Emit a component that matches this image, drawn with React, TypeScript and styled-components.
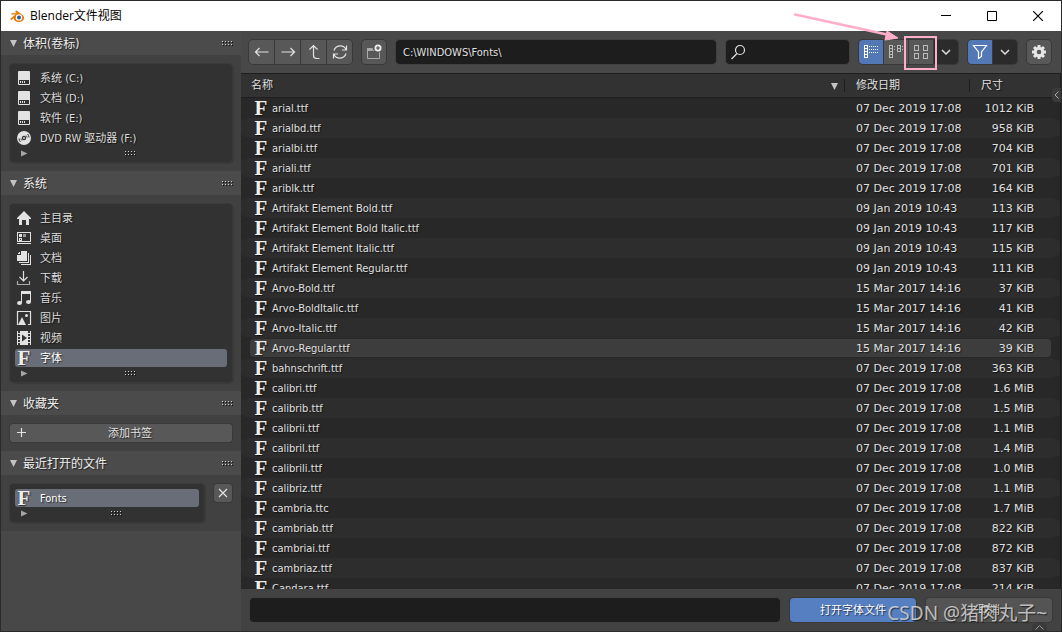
import React from 'react';
import styled, { createGlobalStyle, css } from 'styled-components';

const sans = '"DejaVu Sans Condensed", "DejaVu Sans", "Noto Sans CJK SC", sans-serif';
const wide = '"DejaVu Sans", "Noto Sans CJK SC", sans-serif';

const GlobalStyle = createGlobalStyle`
  * { box-sizing: border-box; }
  body { margin: 0; background: #2b2b2b; }
  button, input { font: inherit; color: inherit; margin: 0; padding: 0; border: 0; outline: 0; }
  button { cursor: pointer; text-shadow: inherit; }
  svg { display: block; flex: none; }
`;

const Window = styled.div`
  display: flex;
  flex-direction: column;
  height: 100vh;
  border: 1px solid #2b2b2b;
  background: #484848;
  color: #e0e0e0;
  font: 11px/20px ${sans};
  text-shadow: 1px 1px 1px rgba(0, 0, 0, 0.6);
`;

/* Title bar */
const TitleBar = styled.header`
  display: flex;
  align-items: center;
  flex: none;
  height: 30px;
  padding-left: 8px;
  background: #fff;
  color: #000;
  text-shadow: none;
`;

const Title = styled.h1`
  flex: 1;
  margin: 0 0 0 5px;
  font: 12px/20px "Open Sans", "Noto Sans CJK SC", sans-serif;
`;

const CaptionButton = styled.button`
  display: grid;
  place-items: center;
  width: 46px;
  height: 30px;
  background: none;
`;

const Body = styled.div`
  display: flex;
  flex: 1;
  min-height: 0;
`;

/* Sidebar */
const Sidebar = styled.aside`
  flex: none;
  width: 240px;
  background: #484848;
`;

const PanelHeader = styled.h2`
  display: flex;
  align-items: center;
  height: 24px;
  margin: 0;
  padding: 0 8px 0 9px;
  background: #4b4b4b;
  font: 12px/22px ${sans};
  color: #eee;
`;

const PanelTitle = styled.span`
  flex: 1;
  padding: 2px 0 0 6px;
`;

const PanelBody = styled.div`
  display: flex;
  align-items: flex-start;
  gap: 10px;
  padding: 9px;
  background: #414141;
`;

const ListBox = styled.div`
  flex: 1;
  padding: 4px 5px 3px;
  border-radius: 4px;
  background: #323232;
  box-shadow: 0 0 0 1px #3a3a3a, 1px 1px 0 1px #393939;
`;

const List = styled.ul`
  margin: 0;
  padding: 0;
  list-style: none;
`;

const ListRow = styled.li`
  padding: 1px 0;
`;

const Item = styled.button<{ $active?: boolean }>`
  display: flex;
  align-items: center;
  gap: 8px;
  width: 100%;
  height: 18px;
  padding-left: 1px;
  border-radius: 3px;
  background: ${(p) => (p.$active ? '#696d77' : 'transparent')};
  color: ${(p) => (p.$active ? '#fff' : '#dcdcdc')};
  text-align: left;
`;

const Label = styled.span`
  padding-top: 2px;
  line-height: 16px;
`;

const ListFooter = styled.div`
  display: grid;
  grid-template-columns: 18px 1fr;
  align-items: center;
  justify-items: center;
  height: 11px;
`;

const WideButton = styled.button`
  display: grid;
  grid-template-columns: 24px 1fr 6px;
  align-items: center;
  justify-items: center;
  flex: 1;
  height: 18px;
  border-radius: 3px;
  background: #585858;
  box-shadow: 0 0 0 1px #393939;
`;

const RemoveButton = styled.button`
  display: grid;
  place-items: center;
  width: 18px;
  height: 18px;
  border-radius: 3px;
  background: #585858;
  box-shadow: 0 0 0 1px #393939;
`;

/* Main region */
const Main = styled.main`
  position: relative;
  display: flex;
  flex-direction: column;
  flex: 1;
  min-width: 0;
`;

const Toolbar = styled.div`
  display: flex;
  align-items: center;
  gap: 10px;
  flex: none;
  height: 42px;
  padding: 0 10px 0 8px;
  background: #484848;
`;

const Group = styled.div`
  display: flex;
  gap: 1px;
  border-radius: 4px;
  background: #393939;
  box-shadow: 0 0 0 1px #393939;
  & > :first-child { border-radius: 4px 0 0 4px; }
  & > :last-child { border-radius: 0 4px 4px 0; }
  & > :only-child { border-radius: 4px; }
`;

const tones = { normal: '#585858', active: '#5279b6', menu: '#2b2b2b' };

const ToolButton = styled.button<{ $tone?: keyof typeof tones }>`
  position: relative;
  display: grid;
  place-items: center;
  width: 24px;
  height: 24px;
  background: ${(p) => tones[p.$tone ?? 'normal']};
`;

const NavButton = styled(ToolButton)`
  width: 25px;
`;

const fieldBox = css`
  height: 24px;
  border-radius: 4px;
  background: #1d1d1d;
  box-shadow: 0 0 0 1px #404040;
`;

const Field = styled.input`
  ${fieldBox}
  flex: 1;
  min-width: 0;
  padding: 0 7px;
  text-shadow: inherit;
`;

const SearchField = styled.label`
  ${fieldBox}
  display: flex;
  align-items: center;
  flex: none;
  width: 123px;
  padding-left: 4px;
  input { flex: 1; min-width: 0; background: none; }
`;

const Annotation = styled.svg`
  position: absolute;
  right: -4px;
  top: -28px;
  z-index: 2;
  pointer-events: none;
`;

/* File table */
const FileArea = styled.div`
  flex: 1;
  min-height: 0;
  overflow: hidden;
  border-top: 1px solid #1e1e1e;
  border-right: 1px solid #1e1e1e;
  background: #282828;
`;

const Table = styled.table`
  width: 100%;
  table-layout: fixed;
  border-collapse: separate;
  border-spacing: 0;
`;

const HeadCell = styled.th<{ $width?: number }>`
  width: ${(p) => (p.$width ? `${p.$width}px` : 'auto')};
  height: 24px;
  padding: 1px 6px 0 ${(p) => (p.$width ? 12 : 10)}px;
  border-bottom: 1px solid #1e1e1e;
  background: ${(p) => (p.$width ? 'linear-gradient(#1e1e1e, #1e1e1e) left center / 1px 13px no-repeat, ' : '')}#323232;
  font-weight: normal;
  text-align: left;
`;

const HeadLabel = styled.span`
  display: flex;
  align-items: center;
  justify-content: space-between;
`;

const Cell = styled.td`
  height: 20px;
  padding: 2px 0 0 12px;
  border: 1px solid transparent;
  border-width: 1px 0;
  background-clip: padding-box;
  font-family: ${wide};
  line-height: 16px;
  white-space: nowrap;
  &:first-child {
    padding: 0 0 0 3px;
    border-left-width: 9px;
    border-radius: 13px 0 0 13px / 5px 0 0 5px;
    font-family: ${sans};
  }
  &:last-child {
    padding: 2px 17px 0 0;
    border-right-width: 9px;
    border-radius: 0 13px 13px 0 / 0 5px 5px 0;
    text-align: right;
  }
`;

const Row = styled.tr<{ $hover?: boolean }>`
  background: #282828;
  &:nth-child(even) { background: #2d2d2d; }
  ${(p) => p.$hover && css`${Cell} { background-color: #3d3d3d; }`}
`;

const FileName = styled.span`
  display: flex;
  align-items: center;
  gap: 3px;
  height: 18px;
`;

const Glyph = styled.span`
  width: 16px;
  height: 18px;
  flex: none;
  color: #eee;
  font: bold 21px/18px "Liberation Serif", serif;
  text-align: center;
`;

const IconSlot = styled.span`
  display: grid;
  place-items: center;
  width: 16px;
  height: 18px;
  flex: none;
`;

const Footer = styled.footer`
  display: flex;
  align-items: flex-start;
  gap: 10px;
  flex: none;
  height: 42px;
  padding: 9px;
  background: #424242;
`;

const ActionButton = styled.button<{ $primary?: boolean }>`
  width: 126px;
  height: 24px;
  padding-top: 2px;
  flex: none;
  border-radius: 4px;
  background: ${(p) => (p.$primary ? '#557fc1' : '#545454')};
  box-shadow: 0 0 0 1px #393939;
  color: ${(p) => (p.$primary ? '#fff' : '#dcdcdc')};
`;

const RegionTab = styled.button<{ $edge: 'right' | 'bottom' }>`
  position: absolute;
  display: grid;
  place-items: center;
  background: #3a3a3a;
  ${(p) => p.$edge === 'right'
    ? 'right: 0; top: 57px; width: 9px; height: 14px; border-radius: 4px 0 0 4px;'
    : 'right: 14px; bottom: 0; width: 15px; height: 8px; border-radius: 4px 4px 0 0;'}
`;

const Watermark = styled.span`
  position: absolute;
  right: 14px;
  bottom: 5px;
  color: rgba(225, 225, 225, 0.8);
  font: 19px/26px "Noto Sans", "Noto Sans CJK SC", sans-serif;
  white-space: nowrap;
  pointer-events: none;
`;

/* Icons */
const Triangle = ({ right = false }: { right?: boolean }) => (
  <svg width="7" height="7" viewBox="0 0 7 7" fill={right ? '#a5a5a5' : '#c4c4c4'}>
    <path d={right ? 'M0 .5 6.500 3.500 0 6.500z' : 'M0 0h7L3.500 7z'} />
  </svg>
);

const Grip = () => (
  <svg width="11" height="5" viewBox="0 0 11 5" shapeRendering="crispEdges">
    {[0, 3, 6, 9].map((x) => (
      <React.Fragment key={x}>
        <path d={`M${x + 1} 1h1v1h-1zM${x + 1} 4h1v1h-1z`} fill="#111" />
        <path d={`M${x} 0h1v1h-1zM${x} 3h1v1h-1z`} fill="#d0d0d0" />
      </React.Fragment>
    ))}
  </svg>
);

const Chevron = () => (
  <svg width="10" height="6" viewBox="0 0 10 6" fill="none" stroke="#ddd" strokeWidth="1.500">
    <path d="M1 1l4 4 4-4" />
  </svg>
);

const line = { fill: 'none', stroke: '#e2e2e2', strokeWidth: 1.2 } as const;

const drawings: Record<string, React.ReactNode> = {
  drive: (
    <>
      <path d="M2 2q0-1 1-1h10q1 0 1 1v12q0 1-1 1H3q-1 0-1-1z" fill="#e2e2e2" />
      <path d="M3 10h10v4H3z" fill="#333" />
      <path d="M4 11h1v2H4zM6 11h1v2H6zM8 11h1v2H8z" fill="#e2e2e2" />
    </>
  ),
  disc: (
    <>
      <circle cx="8" cy="8" r="7" fill="#e2e2e2" />
      <circle cx="8" cy="8" r="2.200" fill="#333" />
      <circle cx="8" cy="8" r="0.900" fill="#e2e2e2" />
      <path d="M3 8.500a5 5 0 0 0 1.500 3.500M5 8.500a3 3 0 0 0 1 2M13 7.500A5 5 0 0 0 11.500 4M11 7.500a3 3 0 0 0-1-2" fill="none" stroke="#333" />
    </>
  ),
  home: <path d="M8 1 15 8v1h-2v6h-3v-5H6v5H3V9H1V8z" fill="#e2e2e2" />,
  desktop: (
    <g shapeRendering="crispEdges">
      <path d="M1 2h14v10H1zM2 3v8h12V3z" fill="#e2e2e2" fillRule="evenodd" />
      <path d="M1 13h14v1H1zM3 4h3v3H3zM3 8h3v3H3z" fill="#e2e2e2" />
      <path d="M7 4h3v3H7z" fill="#999" />
      <path d="M4 9h1v1H4z" fill="#333" />
    </g>
  ),
  documents: (
    <g shapeRendering="crispEdges">
      <path d="M5 1h6v10H1V5h4zM4 1v3H1z" fill="#e2e2e2" />
      <path d="M12 3h1v10H3v-1h9zM14 5h1v10H5v-1h9z" fill="#e2e2e2" />
    </g>
  ),
  download: (
    <g {...line}>
      <path d="M7.500 1v9.500M3.500 7l4 4 4-4" />
      <path d="M1.500 11v3.500h12V11" stroke="#aaa" />
    </g>
  ),
  music: (
    <>
      <path d="M5 1h10v11h-1V4H6v9H5z" fill="#e2e2e2" />
      <ellipse cx="3.500" cy="13" rx="2.500" ry="2" fill="#e2e2e2" />
      <ellipse cx="12.500" cy="12" rx="2.500" ry="2" fill="#e2e2e2" />
    </>
  ),
  picture: (
    <>
      <path d="M12 14.500h2.500v-13h-13v13H2" {...line} />
      <path d="M2 15 6 7l4 8z" fill="#e2e2e2" />
      <circle cx="10.500" cy="5.500" r="1.500" fill="#e2e2e2" />
    </>
  ),
  video: (
    <>
      <path d="M1 1h1v2h2V1h8v2h2V1h1v14h-1v-2h-2v2H4v-2H2v2H1zM2 4v2h2V4zM2 7v2h2V7zM2 10v2h2v-2zM12 4v2h2V4zM12 7v2h2V7zM12 10v2h2v-2z" fill="#e2e2e2" fillRule="evenodd" />
      <path d="M6 4.500 11 8l-5 3.500z" fill="#333" />
    </>
  ),
  back: <path d="M14.500 8h-13M5.500 4l-4 4 4 4" {...line} />,
  forward: <path d="M1.500 8h13M10.500 4l4 4-4 4" {...line} />,
  parent: <path d="M3.500 5.500 7.500 1.500l4 4M7.500 1.500v10q0 3 3 3h3" {...line} />,
  refresh: (
    <path d="M14.500 1.500v4.500H10M14 5.500A6.500 6.500 0 0 0 2 6.500M1.500 14.500V10H6M2 10.500A6.500 6.500 0 0 0 14 9.500" {...line} />
  ),
  newFolder: (
    <>
      <path d="M1.500 14.500v-10h5v2h7v8z" fill="none" stroke="#aaa" />
      <path d="M1 4h5v3H1z" fill="#aaa" />
      <circle cx="12" cy="4" r="4.500" fill="#585858" />
      <circle cx="12" cy="4" r="3.500" fill="#eee" />
      <path d="M12 2v4M10 4h4" stroke="#444" />
    </>
  ),
  search: (
    <g {...line}>
      <circle cx="10" cy="6" r="4.500" />
      <path d="M7 9.500 1.500 15" />
    </g>
  ),
  listView: (
    <g shapeRendering="crispEdges">
      <path d="M1 1h4v13H1zM2 2v2h2V2zM2 5v2h2V5zM2 8v2h2V8zM2 11v2h2v-2z" fill="#fff" fillRule="evenodd" />
      <path d="M6 2.500h10M6 5.500h10M6 8.500h10" stroke="#fff" strokeDasharray="1 1" />
    </g>
  ),
  columnView: (
    <g shapeRendering="crispEdges">
      <path d="M1 1h4v13H1zM2 2v2h2V2zM2 5v2h2V5zM2 8v2h2V8zM2 11v2h2v-2zM9 1h4v7H9zM10 2v2h2V2zM10 5v2h2V5z" fill="#bbb" fillRule="evenodd" />
      <path d="M6 2.500h2M6 5.500h2M14 2.500h2M14 5.500h2" stroke="#bbb" strokeDasharray="1 1" />
    </g>
  ),
  gridView: (
    <path d="M1.500 1.500h4v5h-4zM10.500 1.500h4v5h-4zM1.500 9.500h4v5h-4zM10.500 9.500h4v5h-4z" fill="none" stroke="#bbb" shapeRendering="crispEdges" />
  ),
  filter: <path d="M1.500 1.500h13L9.500 8v4.500l-3 2V8z" {...line} stroke="#fff" />,
  gear: (
    <>
      <circle cx="8" cy="8" r="3.800" fill="none" stroke="#e6e6e6" strokeWidth="3" />
      {[0, 45, 90, 135].map((a) => (
        <path key={a} d="M6.500 1h3v3h-3zM6.500 12h3v3h-3z" fill="#e6e6e6" transform={`rotate(${a} 8 8)`} />
      ))}
    </>
  ),
  plus: <path d="M7.500 3v9M3 7.500h9" {...line} />,
  close: <path d="M4 4l8 8M12 4l-8 8" {...line} />,
};

const Icon = ({ name }: { name: string }) => (
  <svg width="16" height="16" viewBox="0 0 16 16" aria-hidden="true">{drawings[name]}</svg>
);

const BlenderLogo = () => (
  <svg width="16" height="14" viewBox="0 0 16 14" aria-hidden="true">
    <path d="M1 10 6.500 5.500H2.200V4.300h5.600L6 2.800 7.600 1.400l6 4.600c3.200 3 .8 7-3.600 7-3.200 0-5.300-1.800-5.200-4L2.400 11z" fill="#ea7600" />
    <circle cx="10" cy="8.500" r="3.200" fill="#fff" />
    <circle cx="10" cy="8.500" r="2" fill="#2a5c94" />
  </svg>
);

/* Data */
interface Entry { icon: string; label: string; active?: boolean }

const volumes: Entry[] = [
  { icon: 'drive', label: '系统 (C:)' },
  { icon: 'drive', label: '文档 (D:)' },
  { icon: 'drive', label: '软件 (E:)' },
  { icon: 'disc', label: 'DVD RW 驱动器 (F:)' },
];

const places: Entry[] = [
  { icon: 'home', label: '主目录' },
  { icon: 'desktop', label: '桌面' },
  { icon: 'documents', label: '文档' },
  { icon: 'download', label: '下载' },
  { icon: 'music', label: '音乐' },
  { icon: 'picture', label: '图片' },
  { icon: 'video', label: '视频' },
  { icon: 'font', label: '字体', active: true },
];

const recent: Entry[] = [{ icon: 'font', label: 'Fonts', active: true }];

const dec = '07 Dec 2019 17:08';
const jan = '09 Jan 2019 10:43';
const mar = '15 Mar 2017 14:16';

const files: [string, string, string][] = [
  ['arial.ttf', dec, '1012 KiB'],
  ['arialbd.ttf', dec, '958 KiB'],
  ['arialbi.ttf', dec, '704 KiB'],
  ['ariali.ttf', dec, '701 KiB'],
  ['ariblk.ttf', dec, '164 KiB'],
  ['Artifakt Element Bold.ttf', jan, '113 KiB'],
  ['Artifakt Element Bold Italic.ttf', jan, '117 KiB'],
  ['Artifakt Element Italic.ttf', jan, '115 KiB'],
  ['Artifakt Element Regular.ttf', jan, '111 KiB'],
  ['Arvo-Bold.ttf', mar, '37 KiB'],
  ['Arvo-BoldItalic.ttf', mar, '41 KiB'],
  ['Arvo-Italic.ttf', mar, '42 KiB'],
  ['Arvo-Regular.ttf', mar, '39 KiB'],
  ['bahnschrift.ttf', dec, '363 KiB'],
  ['calibri.ttf', dec, '1.6 MiB'],
  ['calibrib.ttf', dec, '1.5 MiB'],
  ['calibrii.ttf', dec, '1.1 MiB'],
  ['calibril.ttf', dec, '1.4 MiB'],
  ['calibrili.ttf', dec, '1.0 MiB'],
  ['calibriz.ttf', dec, '1.1 MiB'],
  ['cambria.ttc', dec, '1.7 MiB'],
  ['cambriab.ttf', dec, '822 KiB'],
  ['cambriai.ttf', dec, '872 KiB'],
  ['cambriaz.ttf', dec, '837 KiB'],
  ['Candara.ttf', dec, '214 KiB'],
];

const EntryList = ({ entries }: { entries: Entry[] }) => (
  <ListBox>
    <List>
      {entries.map((e) => (
        <ListRow key={e.label}>
          <Item $active={e.active}>
            {e.icon === 'font' ? <Glyph aria-hidden="true">F</Glyph> : <IconSlot><Icon name={e.icon} /></IconSlot>}
            <Label>{e.label}</Label>
          </Item>
        </ListRow>
      ))}
    </List>
    <ListFooter><Triangle right /><Grip /></ListFooter>
  </ListBox>
);

const Panel = ({ title, children }: { title: string; children: React.ReactNode }) => (
  <section>
    <PanelHeader><Triangle /><PanelTitle>{title}</PanelTitle><Grip /></PanelHeader>
    <PanelBody>{children}</PanelBody>
  </section>
);

export default function App() {
  return (
    <Window>
      <GlobalStyle />
      <TitleBar>
        <BlenderLogo />
        <Title>Blender文件视图</Title>
        <CaptionButton aria-label="最小化">
          <svg width="10" height="10"><path d="M0 4.500h10" stroke="#000" /></svg>
        </CaptionButton>
        <CaptionButton aria-label="最大化">
          <svg width="10" height="10"><path d="M.5.5h9v9h-9z" fill="none" stroke="#000" /></svg>
        </CaptionButton>
        <CaptionButton aria-label="关闭">
          <svg width="10" height="10"><path d="M0 0l10 10M10 0L0 10" stroke="#000" strokeWidth="1.200" /></svg>
        </CaptionButton>
      </TitleBar>
      <Body>
        <Sidebar>
          <Panel title="体积(卷标)"><EntryList entries={volumes} /></Panel>
          <Panel title="系统"><EntryList entries={places} /></Panel>
          <Panel title="收藏夹">
            <WideButton><Icon name="plus" /><Label>添加书签</Label></WideButton>
          </Panel>
          <Panel title="最近打开的文件">
            <EntryList entries={recent} />
            <RemoveButton aria-label="清除"><Icon name="close" /></RemoveButton>
          </Panel>
        </Sidebar>
        <Main>
          <Toolbar>
            <Group>
              <NavButton aria-label="后退"><Icon name="back" /></NavButton>
              <NavButton aria-label="前进"><Icon name="forward" /></NavButton>
              <NavButton aria-label="上级目录"><Icon name="parent" /></NavButton>
              <NavButton aria-label="刷新"><Icon name="refresh" /></NavButton>
            </Group>
            <Group><ToolButton aria-label="新建目录"><Icon name="newFolder" /></ToolButton></Group>
            <Field aria-label="路径" defaultValue={'C:\\WINDOWS\\Fonts\\'} />
            <SearchField><Icon name="search" /><input type="text" aria-label="搜索" /></SearchField>
            <Group>
              <ToolButton $tone="active" aria-label="列表"><Icon name="listView" /></ToolButton>
              <ToolButton aria-label="分栏"><Icon name="columnView" /></ToolButton>
              <ToolButton aria-label="缩略图">
                <Icon name="gridView" />
                <Annotation width="144" height="60" viewBox="0 0 144 60" aria-hidden="true">
                  <path d="M2 2.500 94 22.500" stroke="#ffaec9" strokeWidth="2.500" strokeLinecap="round" />
                  <path d="M94 19 105 26 92 28z" fill="#ffaec9" stroke="#ffaec9" />
                  <path d="M112 25h31v32h-31z" fill="none" stroke="#ffaec9" strokeWidth="2" />
                </Annotation>
              </ToolButton>
              <ToolButton $tone="menu" aria-label="显示设置"><Chevron /></ToolButton>
            </Group>
            <Group>
              <ToolButton $tone="active" aria-label="过滤"><Icon name="filter" /></ToolButton>
              <ToolButton $tone="menu" aria-label="过滤设置"><Chevron /></ToolButton>
            </Group>
            <Group><ToolButton aria-label="选项"><Icon name="gear" /></ToolButton></Group>
          </Toolbar>
          <FileArea>
            <Table>
              <thead>
                <tr>
                  <HeadCell><HeadLabel>名称<Triangle /></HeadLabel></HeadCell>
                  <HeadCell $width={125}>修改日期</HeadCell>
                  <HeadCell $width={91}>尺寸</HeadCell>
                </tr>
              </thead>
              <tbody>
                {files.map(([name, date, size]) => (
                  <Row key={name} $hover={name === 'Arvo-Regular.ttf'}>
                    <Cell><FileName><Glyph aria-hidden="true">F</Glyph><Label>{name}</Label></FileName></Cell>
                    <Cell>{date}</Cell>
                    <Cell>{size}</Cell>
                  </Row>
                ))}
              </tbody>
            </Table>
          </FileArea>
          <Footer>
            <Field aria-label="文件名" />
            <ActionButton $primary>打开字体文件</ActionButton>
            <ActionButton>取消</ActionButton>
          </Footer>
          <RegionTab $edge="right" aria-label="展开侧栏">
            <svg width="5" height="8"><path d="M4.500.5 1 4l3.500 3.500" fill="none" stroke="#aaa" /></svg>
          </RegionTab>
          <RegionTab $edge="bottom" aria-label="展开区域">
            <svg width="9" height="5"><path d="M.5 4.500l4-4 4 4" fill="none" stroke="#999" /></svg>
          </RegionTab>
          <Watermark>CSDN @猪肉丸子~</Watermark>
        </Main>
      </Body>
    </Window>
  );
}
